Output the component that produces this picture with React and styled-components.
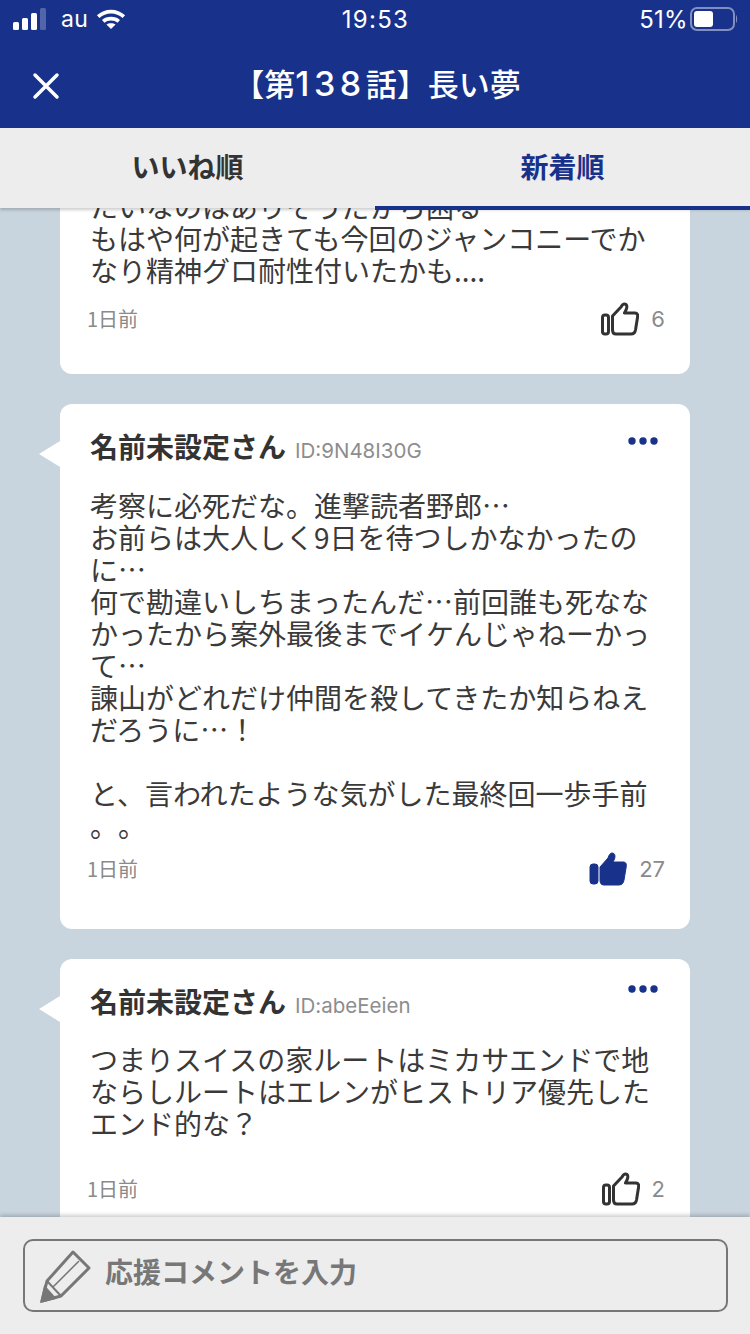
import React from "react";
import styled, { createGlobalStyle } from "styled-components";

const NAVY = "#18328c";
const FONT = `"Noto Sans CJK JP", "Noto Sans", sans-serif`;

const Global = createGlobalStyle`
  html, body { margin: 0; padding: 0; background: #c8d4de; }
  * { box-sizing: border-box; }
`;

const Page = styled.div`
  width: 750px; height: 1334px; display: flex; flex-direction: column;
  overflow: hidden; background: #c8d4de; font-family: ${FONT}; position: relative;
  text-spacing-trim: space-all;
`;
const Header = styled.header`
  height: 128px; flex: none; background: ${NAVY}; color: #fff; display: flex; flex-direction: column;
`;
const StatusBar = styled.div`
  height: 40px; display: grid; grid-template-columns: 1fr auto 1fr; align-items: center; padding: 0 12px 2px 13px;
  font-family: Inter, "Liberation Sans", sans-serif; font-size: 24px; letter-spacing: .3px;
`;
const StatusLeft = styled.div`display: flex; align-items: center; gap: 14px;`;
const StatusRight = styled.div`display: flex; align-items: center; justify-content: flex-end; gap: 2px;`;
const Carrier = styled.span`font-size: 23px; margin-right: -6px;`;
const Clock = styled.span`letter-spacing: 1.3px;`;
const TitleRow = styled.div`flex: 1; display: flex; align-items: center; justify-content: center; position: relative; padding-bottom: 4px;`;
const Title = styled.h1`margin: 2px 0 0; font-size: 31px; font-weight: 500; line-height: 44px; padding-left: 4px;`;
const TitleDigits = styled.span`font-family: Inter, "Liberation Sans", sans-serif; font-size: 34px; letter-spacing: 4.5px;`;
const Close = styled.svg`position: absolute; left: 32px; top: 32px;`;

const Tabs = styled.nav`
  height: 80px; flex: none; background: #ededed; display: grid; grid-template-columns: 1fr 1fr;
  position: relative; z-index: 2; box-shadow: 0 2px 3px rgba(0,0,0,.2);
`;
const Tab = styled.div`
  display: flex; align-items: center; justify-content: center; font-size: 28px; font-weight: 700;
  color: ${p => (p.$active ? NAVY : "#333")};
  border-bottom: ${p => (p.$active ? `4px solid ${NAVY}` : "none")};
  height: ${p => (p.$active ? "82px" : "80px")};
  padding-bottom: ${p => (p.$active ? "2px" : "4px")};
`;

const List = styled.main`
  flex: 1; min-height: 0; overflow: hidden; display: flex; flex-direction: column; gap: 30px;
  padding-left: 60px; padding-right: 60px;
`;
const Card = styled.article`
  flex: none; background: #fff; border-radius: 12px; position: relative; padding: 0 25px 0 30px;
  height: ${p => p.$h}px;
  &::before {
    content: ""; position: absolute; left: -21px; top: 37px;
    border-style: solid; border-width: 13px 21px 13px 0; border-color: transparent #fff transparent transparent;
  }
`;
const ScrolledCard = styled(Card)`
  margin-top: -24px; padding-top: 6px;
  &::before { content: none; }
`;
const HeadRow = styled.div`display: flex; align-items: baseline; gap: 9px; padding-top: 22px; height: 70px;`;
const Name = styled.span`font-size: 28px; font-weight: 700; color: #333; line-height: 40px;`;
const UserId = styled.span`font-family: Inter, "Liberation Sans", sans-serif; font-size: 20.5px; color: #8d8d8d;`;
const More = styled.svg`position: absolute; right: 32px; top: ${p => p.$top}px;`;
const Body = styled.p`
  margin: ${p => p.$top ?? 15}px 0 0; font-size: 28px; line-height: 32px; color: #3a3a3a; white-space: pre; font-weight: 400;
`;
const Foot = styled.div`
  display: flex; align-items: center; justify-content: space-between; height: 36px; margin: ${p => p.$gap}px 0 0 -3px;
`;
const Age = styled.span`font-size: 20px; color: #8a8a8a; line-height: 36px;`;
const Likes = styled.div`display: flex; align-items: center; gap: 12px; color: #8a8a8a; font-family: Inter, "Liberation Sans", sans-serif; font-size: 22px;`;

const Bottom = styled.footer`
  position: absolute; left: 0; right: 0; bottom: 0; height: 117px; background: #ededed; z-index: 2;
  box-shadow: 0 -2px 4px rgba(0,0,0,.2); padding: 22px 23px 0;
`;
const Input = styled.div`
  height: 73px; width: 705px; border: 2px solid #777; border-radius: 10px; display: flex; align-items: center;
  padding-left: 14px; gap: 14px; color: #777; font-size: 28px; font-weight: 700;
`;
const InputLabel = styled.span`margin-top: -10px;`;

const Wifi = () => (
  <svg width="30" height="22" viewBox="0 0 32 24" fill="none" stroke="#fff" strokeWidth="4">
    <path d="M2 9.5 C10 2 22 2 30 9.5" />
    <path d="M7.5 14.5 C12 10.5 20 10.5 24.5 14.5" />
    <path d="M16 23 L11 18 C13.5 16 18.5 16 21 18 Z" fill="#fff" stroke="none" />
  </svg>
);
const Signal = () => (
  <svg width="34" height="22" viewBox="0 0 34 22">
    <rect x="0" y="14" width="6" height="8" rx="1.5" fill="#fff" />
    <rect x="9" y="10" width="6" height="12" rx="1.5" fill="#fff" />
    <rect x="18" y="5" width="6" height="17" rx="1.5" fill="#fff" />
    <rect x="27" y="0" width="6" height="22" rx="1.5" fill="#fff" fillOpacity=".25" />
  </svg>
);
const Battery = () => (
  <svg width="48" height="24" viewBox="0 0 48 24">
    <rect x="1" y="1" width="43" height="22" rx="6" fill="none" stroke="#fff" strokeOpacity=".45" strokeWidth="2" />
    <rect x="4" y="4" width="19" height="16" rx="3" fill="#fff" />
    <path d="M46 8 C47.5 9 47.5 15 46 16 Z" fill="#fff" fillOpacity=".45" />
  </svg>
);
const Thumb = ({ filled }) => (
  <svg width="38" height="34" viewBox="0 0 38 34">
    {filled ? (
      <g fill={NAVY} stroke={NAVY} strokeWidth="1" strokeLinejoin="round">
        <rect x="1" y="12" width="8" height="20" rx="3" />
        <path d="M11 15 L19 6 C20 3 21 1 23 1 C26 1 26.5 4 25.5 7 L24 10 L34 10 C37 10 38 12 37 16 L35 28 C34.5 31 33 33 30 33 L15 33 C12 33 11 31 11 28 Z" />
      </g>
    ) : (
      <g fill="none" stroke="#333" strokeWidth="3" strokeLinejoin="round">
        <rect x="1.5" y="13" width="6" height="19" rx="2.5" />
        <path d="M11.5 14 L20 5 C21 3 22 2 23.5 2 C26 2 26.5 5 25 8 L23.5 11 L34 11 C36.5 11 37 13 36.5 15.5 L34.5 28 C34 30.5 32.5 32 30 32 L15 32 C12.5 32 11.5 30.5 11.5 28 Z" />
      </g>
    )}
  </svg>
);
const Dots = ({ top }) => (
  <More $top={top} width="30" height="10" viewBox="0 0 30 10" fill={NAVY}>
    <circle cx="4" cy="5" r="3.7" /><circle cx="15" cy="5" r="3.7" /><circle cx="26" cy="5" r="3.7" />
  </More>
);
const Footer = ({ count, liked, gap }) => (
  <Foot $gap={gap}>
    <Age>1日前</Age>
    <Likes><Thumb filled={liked} />{count}</Likes>
  </Foot>
);

export default function App() {
  return (
    <Page>
      <Global />
      <Header>
        <StatusBar>
          <StatusLeft><Signal /><Carrier>au</Carrier><Wifi /></StatusLeft>
          <Clock>19:53</Clock>
          <StatusRight><span>51%</span><Battery /></StatusRight>
        </StatusBar>
        <TitleRow>
          <Close width="28" height="28" viewBox="0 0 28 28" stroke="#fff" strokeWidth="3.5" strokeLinecap="round">
            <path d="M3 3 L25 25 M25 3 L3 25" />
          </Close>
          <Title>【第<TitleDigits>138</TitleDigits>話】長い夢</Title>
        </TitleRow>
      </Header>
      <Tabs>
        <Tab>いいね順</Tab>
        <Tab $active>新着順</Tab>
      </Tabs>
      <List>
        <ScrolledCard $h={190}>
          <Body $top={0}>{"たいなのはありそうだから困る\nもはや何が起きても今回のジャンコニーでか\nなり精神グロ耐性付いたかも...."}</Body>
          <Footer count="6" gap={15} />
        </ScrolledCard>
        <Card $h={525}>
          <HeadRow><Name>名前未設定さん</Name><UserId>ID:9N48I30G</UserId></HeadRow>
          <Dots top={32} />
          <Body>{"考察に必死だな。進撃読者野郎…\nお前らは大人しく9日を待つしかなかったの\nに…\n何で勘違いしちまったんだ…前回誰も死なな\nかったから案外最後までイケんじゃねーかっ\nて…\n諫山がどれだけ仲間を殺してきたか知らねえ\nだろうに…！\n\nと、言われたような気がした最終回一歩手前\n。。"}</Body>
          <Footer count="27" liked gap={10} />
        </Card>
        <Card $h={300}>
          <HeadRow><Name>名前未設定さん</Name><UserId>ID:abeEeien</UserId></HeadRow>
          <Dots top={25} />
          <Body $top={14}>{"つまりスイスの家ルートはミカサエンドで地\nならしルートはエレンがヒストリア優先した\nエンド的な？"}</Body>
          <Footer count="2" gap={32} />
        </Card>
      </List>
      <Bottom>
        <Input>
          <svg width="52" height="54" viewBox="0 0 52 54" fill="none" stroke="#777" strokeWidth="3">
            <path d="M34 3 L50 19 L22 47 L3 52 L8 32 Z" strokeLinejoin="round" />
            <path d="M14 38 L40 12" strokeWidth="1.5" />
            <path d="M8 32 L22 47" strokeWidth="2" />
            <path d="M3 52 L6 39 L15 49 Z" fill="#777" />
          </svg>
          <InputLabel>応援コメントを入力</InputLabel>
        </Input>
      </Bottom>
    </Page>
  );
}
